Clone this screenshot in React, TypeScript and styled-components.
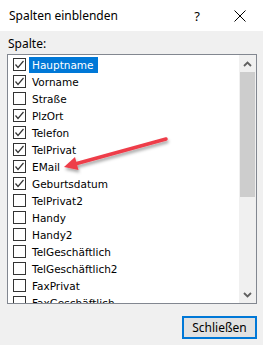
import styled, { createGlobalStyle } from "styled-components";

const GlobalStyle = createGlobalStyle`
  html, body {
    margin: 0;
    padding: 0;
    background: #f0f0f0;
  }
  body {
    font-family: "Noto Sans", "Open Sans", sans-serif;
  }
`;

const Window = styled.div`
  position: relative;
  width: 263px;
  height: 345px;
  display: flex;
  flex-direction: column;
  background: #f0f0f0;
  overflow: hidden;
`;

const TitleBar = styled.div`
  height: 31px;
  flex: none;
  display: flex;
  align-items: center;
  background: #ffffff;
  padding: 0 0 0 9px;
`;

const Title = styled.div`
  flex: 1;
  font-size: 12px;
  line-height: 16px;
  color: #000;
`;

const Help = styled.div`
  width: 40px;
  font-size: 13px;
  line-height: 16px;
  color: #000;
  text-align: center;
`;

const Close = styled.div`
  width: 46px;
  display: flex;
  justify-content: center;
`;

const Body = styled.div`
  flex: 1;
  display: flex;
  flex-direction: column;
  padding: 5px 6px 8px 7px;
  border-left: 1px solid #a0a0a0;
  margin-left: -1px;
`;

const Label = styled.div`
  font-size: 12px;
  line-height: 16px;
  color: #000;
  padding-left: 1px;
  margin-bottom: 2px;
`;

const ListBox = styled.div`
  height: 248px;
  display: flex;
  border: 1px solid #828790;
  background: #fff;
`;

const Items = styled.div`
  flex: 1;
  padding: 1px 0 0 5px;
  overflow: hidden;
`;

const Row = styled.div`
  height: 17px;
  display: flex;
  align-items: center;
`;

const Box = styled.div`
  width: 13px;
  height: 13px;
  box-sizing: border-box;
  border: 1px solid #333;
  background: #fff;
  flex: none;
  display: flex;
  align-items: center;
  justify-content: center;
`;

const ItemText = styled.span<{ $selected?: boolean }>`
  margin-left: 3px;
  padding: 0 4px 0 3px;
  height: 16px;
  line-height: 16px;
  font-family: "DejaVu Sans", Verdana, sans-serif;
  font-size: 10.5px;
  white-space: nowrap;
  color: ${(p) => (p.$selected ? "#fff" : "#000")};
  background: ${(p) => (p.$selected ? "#0078d7" : "transparent")};
`;

const ScrollBar = styled.div`
  width: 17px;
  flex: none;
  display: flex;
  flex-direction: column;
  background: #f0f0f0;
`;

const ScrollButton = styled.div`
  height: 17px;
  display: flex;
  align-items: center;
  justify-content: center;
`;

const Thumb = styled.div`
  height: 125px;
  margin: 0 1px;
  background: #cdcdcd;
`;

const Track = styled.div`
  flex: 1;
`;

const Footer = styled.div`
  display: flex;
  justify-content: flex-end;
  margin-top: 12px;
`;

const Button = styled.button`
  width: 75px;
  height: 23px;
  box-sizing: border-box;
  border: 2px solid #0078d7;
  background: #e1e1e1;
  font-family: "Noto Sans", "Open Sans", sans-serif;
  font-size: 12px;
  color: #000;
  padding: 0;
  margin-right: 0;
`;

const Overlay = styled.svg`
  position: absolute;
  left: 0;
  top: 0;
  pointer-events: none;
`;

const items: [string, boolean][] = [
  ["Hauptname", true],
  ["Vorname", true],
  ["Straße", false],
  ["PlzOrt", true],
  ["Telefon", true],
  ["TelPrivat", true],
  ["EMail", true],
  ["Geburtsdatum", true],
  ["TelPrivat2", false],
  ["Handy", false],
  ["Handy2", false],
  ["TelGeschäftlich", false],
  ["TelGeschäftlich2", false],
  ["FaxPrivat", false],
  ["FaxGeschäftlich", false],
];

function Check() {
  return (
    <svg width="11" height="11" viewBox="0 0 11 11">
      <polyline points="1.5,5.5 4,8.5 9.5,2" fill="none" stroke="#333" strokeWidth="1.2" />
    </svg>
  );
}

export default function App() {
  return (
    <Window>
      <GlobalStyle />
      <TitleBar>
        <Title>Spalten einblenden</Title>
        <Help>?</Help>
        <Close>
          <svg width="12" height="12" viewBox="0 0 12 12">
            <path d="M0.5 0.5 L11.5 11.5 M11.5 0.5 L0.5 11.5" stroke="#000" strokeWidth="1" />
          </svg>
        </Close>
      </TitleBar>
      <Body>
        <Label>Spalte:</Label>
        <ListBox>
          <Items>
            {items.map(([name, checked], i) => (
              <Row key={name}>
                <Box>{checked && <Check />}</Box>
                <ItemText $selected={i === 0}>{name}</ItemText>
              </Row>
            ))}
          </Items>
          <ScrollBar>
            <ScrollButton>
              <svg width="9" height="6" viewBox="0 0 9 6">
                <polyline points="1,5 4.5,1.5 8,5" fill="none" stroke="#606060" strokeWidth="1.8" />
              </svg>
            </ScrollButton>
            <Thumb />
            <Track />
            <ScrollButton>
              <svg width="9" height="6" viewBox="0 0 9 6">
                <polyline points="1,1 4.5,4.5 8,1" fill="none" stroke="#606060" strokeWidth="1.8" />
              </svg>
            </ScrollButton>
          </ScrollBar>
        </ListBox>
        <Footer>
          <Button>Schließen</Button>
        </Footer>
      </Body>
      <Overlay width="263" height="345">
        <defs>
          <filter id="sh" x="-20%" y="-50%" width="140%" height="200%">
            <feDropShadow dx="1" dy="2.5" stdDeviation="1.5" floodColor="#000" floodOpacity="0.35" />
          </filter>
        </defs>
        <g filter="url(#sh)">
          <line x1="75" y1="164" x2="166" y2="139" stroke="#ee3d4a" strokeWidth="3.5" strokeLinecap="round" />
          <polygon points="64,167 78.5,170 75,157" fill="#ee3d4a" />
        </g>
      </Overlay>
    </Window>
  );
}
